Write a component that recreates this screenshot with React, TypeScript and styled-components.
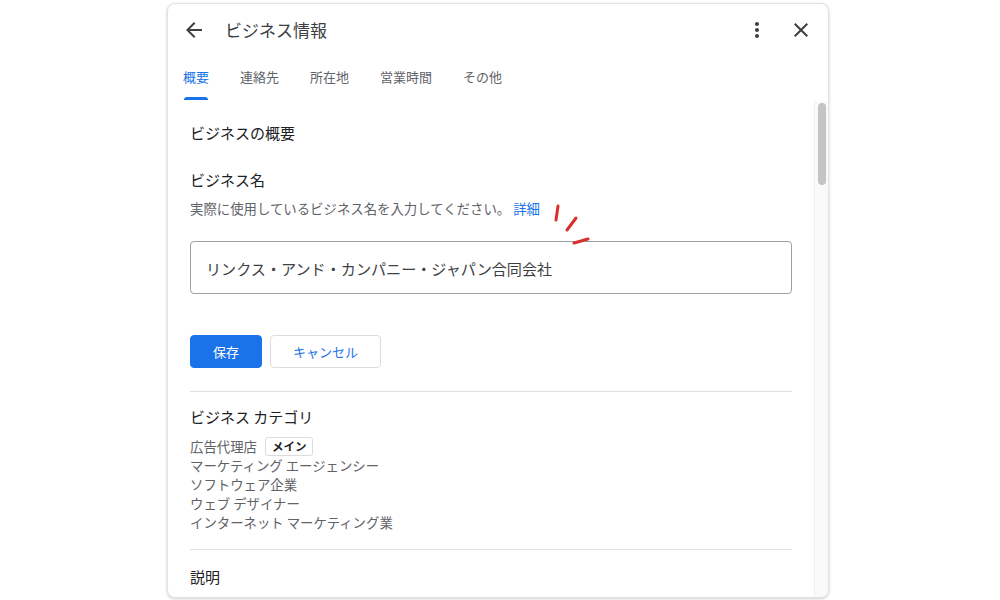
import styled, { createGlobalStyle } from 'styled-components'

const GlobalStyle = createGlobalStyle`
  html, body {
    margin: 0;
    padding: 0;
    background: #ffffff;
    font-family: "Noto Sans CJK JP", "Noto Sans", Roboto, sans-serif;
  }
  * { box-sizing: border-box; }
`

const tabs = ['概要', '連絡先', '所在地', '営業時間', 'その他']

const categories = [
  'マーケティング エージェンシー',
  'ソフトウェア企業',
  'ウェブ デザイナー',
  'インターネット マーケティング業',
]

const BackIcon = () => (
  <svg width="24" height="24" viewBox="0 0 24 24">
    <path fill="#3c4043" d="M20 11H7.83l5.59-5.59L12 4l-8 8 8 8 1.41-1.41L7.83 13H20v-2z" />
  </svg>
)

const MoreIcon = () => (
  <svg width="24" height="24" viewBox="0 0 24 24">
    <path
      fill="#3c4043"
      d="M12 8c1.1 0 2-.9 2-2s-.9-2-2-2-2 .9-2 2 .9 2 2 2zm0 2c-1.1 0-2 .9-2 2s.9 2 2 2 2-.9 2-2-.9-2-2-2zm0 6c-1.1 0-2 .9-2 2s.9 2 2 2 2-.9 2-2-.9-2-2-2z"
    />
  </svg>
)

const CloseIcon = () => (
  <svg width="26" height="26" viewBox="0 0 24 24">
    <path
      fill="#3c4043"
      d="M19 6.41L17.59 5 12 10.59 6.41 5 5 6.41 10.59 12 5 17.59 6.41 19 12 13.41 17.59 19 19 17.59 13.41 12z"
    />
  </svg>
)

export default function App() {
  return (
    <>
      <GlobalStyle />
      <Page>
        <Dialog>
          <Header>
            <IconButton><BackIcon /></IconButton>
            <Title>ビジネス情報</Title>
            <HeaderActions>
              <IconButton><MoreIcon /></IconButton>
              <IconButton><CloseIcon /></IconButton>
            </HeaderActions>
          </Header>
          <TabBar>
            {tabs.map((t, i) => (
              <Tab key={t} $active={i === 0}>
                {t}
                <Indicator $active={i === 0} />
              </Tab>
            ))}
          </TabBar>
          <Body>
            <Content>
              <SectionTitle>ビジネスの概要</SectionTitle>
              <FieldLabel>ビジネス名</FieldLabel>
              <Helper>
                実際に使用しているビジネス名を入力してください。<Link>詳細</Link>
              </Helper>
              <InputBox>リンクス・アンド・カンパニー・ジャパン合同会社</InputBox>
              <Buttons>
                <Button $primary>保存</Button>
                <Button>キャンセル</Button>
              </Buttons>
              <Divider />
              <CategoryTitle>ビジネス カテゴリ</CategoryTitle>
              <CategoryList>
                <CategoryRow>
                  広告代理店<Badge>メイン</Badge>
                </CategoryRow>
                {categories.map((c) => (
                  <CategoryRow key={c}>{c}</CategoryRow>
                ))}
              </CategoryList>
              <Divider $gap={17} />
              <CategoryTitle $gap={16}>説明</CategoryTitle>
              <Marks width="40" height="45" viewBox="0 0 40 45">
                <path d="M6 3 L4 17" />
                <path d="M24 15 L15 27" />
                <path d="M36 36 L22 40" />
              </Marks>
            </Content>
            <ScrollTrack>
              <ScrollThumb />
            </ScrollTrack>
          </Body>
        </Dialog>
      </Page>
    </>
  )
}

const Page = styled.div`
  width: 1000px;
  height: 600px;
  padding: 3px 0 0 167px;
  overflow: hidden;
`

const Dialog = styled.div`
  width: 662px;
  height: 595px;
  background: #ffffff;
  border: 1px solid #e3e3e3;
  border-radius: 8px;
  box-shadow: 0 1px 3px rgba(60, 64, 67, 0.25);
  display: flex;
  flex-direction: column;
  overflow: hidden;
`

const Header = styled.div`
  height: 51px;
  display: flex;
  align-items: center;
  padding: 0 15px 0 14px;
  flex-shrink: 0;
`

const IconButton = styled.div`
  width: 24px;
  height: 24px;
  display: flex;
  align-items: center;
  justify-content: center;
`

const Title = styled.div`
  margin-left: 19px;
  font-size: 17px;
  color: #3c4043;
  line-height: 24px;
`

const HeaderActions = styled.div`
  margin-left: auto;
  display: flex;
  align-items: center;
  gap: 20px;
`

const TabBar = styled.div`
  height: 46px;
  display: flex;
  gap: 31px;
  padding-left: 15px;
  flex-shrink: 0;
`

const Tab = styled.div<{ $active?: boolean }>`
  display: flex;
  flex-direction: column;
  align-items: center;
  padding-top: 13px;
  font-size: 13px;
  line-height: 17px;
  color: ${(p) => (p.$active ? '#1a73e8' : '#5f6368')};
`

const Indicator = styled.div<{ $active?: boolean }>`
  margin-top: 12px;
  width: 24px;
  height: 3px;
  border-radius: 3px 3px 0 0;
  background: ${(p) => (p.$active ? '#1a73e8' : 'transparent')};
`

const Body = styled.div`
  flex: 1;
  display: flex;
  min-height: 0;
`

const Content = styled.div`
  position: relative;
  flex: 1;
  padding: 21px 22px 0 22px;
  overflow: hidden;
`

const SectionTitle = styled.div`
  font-size: 15px;
  line-height: 22px;
  color: #202124;
`

const FieldLabel = styled(SectionTitle)`
  margin-top: 25px;
`

const Helper = styled.div`
  margin-top: 8px;
  font-size: 13.4px;
  line-height: 18px;
  color: #5f6368;
`

const Link = styled.span`
  margin-left: 3px;
  color: #1a73e8;
`

const InputBox = styled.div`
  margin-top: 24px;
  height: 53px;
  border: 1px solid #9aa0a6;
  border-radius: 4px;
  display: flex;
  align-items: center;
  padding: 0 15px;
  font-size: 15.1px;
  color: #3c4043;
`

const Buttons = styled.div`
  margin-top: 41px;
  display: flex;
  gap: 8px;
`

const Button = styled.div<{ $primary?: boolean }>`
  height: 33px;
  padding: 0 22px;
  min-width: ${(p) => (p.$primary ? '72px' : '111px')};
  display: flex;
  align-items: center;
  justify-content: center;
  border-radius: 4px;
  font-size: 13px;
  background: ${(p) => (p.$primary ? '#1a73e8' : '#ffffff')};
  color: ${(p) => (p.$primary ? '#ffffff' : '#1a73e8')};
  border: 1px solid ${(p) => (p.$primary ? '#1a73e8' : '#dadce0')};
`

const Divider = styled.div<{ $gap?: number }>`
  margin-top: ${(p) => p.$gap ?? 23}px;
  height: 1px;
  background: #e0e0e0;
`

const CategoryTitle = styled(SectionTitle)<{ $gap?: number }>`
  margin-top: ${(p) => p.$gap ?? 14}px;
`

const CategoryList = styled.div`
  margin-top: 9px;
  font-size: 13.4px;
  line-height: 19px;
  color: #5f6368;
`

const CategoryRow = styled.div`
  display: flex;
  align-items: center;
  white-space: nowrap;
`

const Badge = styled.span`
  margin-left: 8px;
  height: 19px;
  padding: 0 6px;
  display: inline-flex;
  align-items: center;
  border: 1px solid #dadce0;
  border-radius: 3px;
  font-size: 11.5px;
  font-weight: 700;
  color: #202124;
`

const Marks = styled.svg`
  position: absolute;
  left: 384px;
  top: 102px;
  fill: none;
  stroke: #d9302c;
  stroke-width: 3;
  stroke-linecap: round;
`

const ScrollTrack = styled.div`
  width: 14px;
  flex-shrink: 0;
  background: #fafafa;
  border-left: 1px solid #efefef;
  padding: 2px 2px 0 3px;
`

const ScrollThumb = styled.div`
  width: 8px;
  height: 82px;
  border-radius: 4px;
  background: #c4c4c4;
`
